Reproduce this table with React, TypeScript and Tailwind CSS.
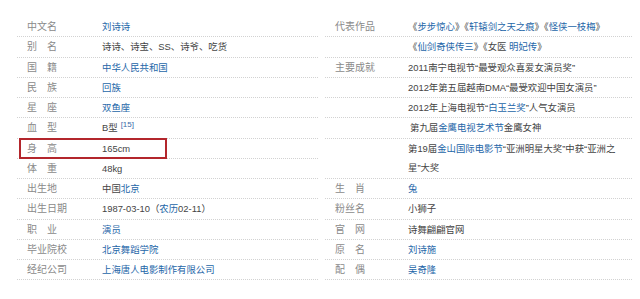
import React from 'react';

type Part = string | { t: string; link?: boolean; sup?: boolean };

interface Row {
  label?: string;
  value: Part[][]; // one array per visual line
  indent?: boolean;
}

const L = (t: string): Part => ({ t, link: true });

const leftRows: Row[] = [
  { label: '中文名', value: [[L('刘诗诗')]] },
  { label: '别名', value: [['诗诗、诗宝、SS、诗爷、吃货']] },
  { label: '国籍', value: [[L('中华人民共和国')]] },
  { label: '民族', value: [[L('回族')]] },
  { label: '星座', value: [[L('双鱼座')]] },
  { label: '血型', value: [['B型', { t: '[15]', sup: true }]] },
  { label: '身高', value: [['165cm']] },
  { label: '体重', value: [['48kg']] },
  { label: '出生地', value: [['中国', L('北京')]] },
  { label: '出生日期', value: [['1987-03-10（', L('农历'), '02-11）']] },
  { label: '职业', value: [[L('演员')]] },
  { label: '毕业院校', value: [[L('北京舞蹈学院')]] },
  { label: '经纪公司', value: [[L('上海唐人电影制作有限公司')]] },
];

const rightRows: Row[] = [
  { label: '代表作品', value: [['《', L('步步惊心'), '》《', L('轩辕剑之天之痕'), '》《', L('怪侠一枝梅'), '》']] },
  { value: [['《', L('仙剑奇侠传三'), '》《女医 ', L('明妃传'), '》']] },
  { label: '主要成就', value: [['2011南宁电视节“最受观众喜爱女演员奖”']] },
  { value: [['2012年第五届越南DMA“最受欢迎中国女演员”']] },
  { value: [['2012年上海电视节“', L('白玉兰奖'), '”人气女演员']] },
  { value: [['第九届', L('金鹰电视艺术节'), '金鹰女神']], indent: true },
  { value: [['第19届', L('金山国际电影节'), '“亚洲明星大奖”中获“亚洲之'], ['星”大奖']] },
  { label: '生肖', value: [[L('兔')]] },
  { label: '粉丝名', value: [['小狮子']] },
  { label: '官网', value: [['诗舞翩翩官网']] },
  { label: '原名', value: [[L('刘诗施')]] },
  { label: '配偶', value: [[L('吴奇隆')]] },
];

const Label: React.FC<{ text?: string }> = ({ text }) => {
  if (!text) return null;
  if (text.length === 2) {
    return (
      <span>
        {text[0]}
        <span className="ml-[10px]">{text[1]}</span>
      </span>
    );
  }
  return <span>{text}</span>;
};

const Value: React.FC<{ parts: Part[] }> = ({ parts }) => (
  <>
    {parts.map((p, i) => {
      if (typeof p === 'string') return <span key={i}>{p}</span>;
      if (p.sup)
        return (
          <sup key={i} className="ml-[3px] text-[8px] text-[#3d6aa8] top-[-4px]">
            {p.t}
          </sup>
        );
      return (
        <span key={i} className="text-[#2566a8]">
          {p.t}
        </span>
      );
    })}
  </>
);

const Column: React.FC<{ rows: Row[]; labelWidth: string; children?: React.ReactNode; className?: string }> = ({
  rows,
  labelWidth,
  children,
  className,
}) => (
  <div className={`relative flex flex-col ${className ?? ''}`}>
    {rows.map((r, i) => (
      <div key={i} className="flex items-start border-b border-dotted border-[#d2d2d2]">
        <div className={`${labelWidth} shrink-0 pl-[10px] text-[10px] leading-[19.25px] text-[#8a8a8a]`}>
          <Label text={r.label} />
        </div>
        <div className={`text-[9.4px] text-[#444] ${r.indent ? 'pl-[2px]' : ''}`}>
          {r.value.length === 1 ? (
            <div className="h-[19.25px] leading-[19.25px] whitespace-nowrap">
              <Value parts={r.value[0]} />
            </div>
          ) : (
            r.value.map((line, j) => (
              <div key={j} className="h-[19.75px] leading-[19.75px] whitespace-nowrap">
                <Value parts={line} />
              </div>
            ))
          )}
        </div>
      </div>
    ))}
    {children}
  </div>
);

export default function App() {
  return (
    <div
      className="w-[640px] h-[299px] bg-white overflow-hidden pt-[17px] pl-[17px] flex"
      style={{ fontFamily: '"Liberation Sans", "Noto Sans CJK SC", sans-serif' }}
    >
      <Column rows={leftRows} labelWidth="w-[85px]" className="w-[301px]">
        <div className="absolute left-[2px] top-[121px] w-[148px] h-[21px] border-2 border-[#b3262c]" />
      </Column>
      <Column rows={rightRows} labelWidth="w-[83px]" className="ml-[7px] w-[307px]" />
    </div>
  );
}
